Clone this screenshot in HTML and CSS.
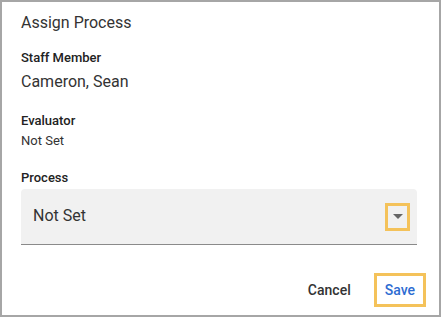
FILE: index.html
```html
<!DOCTYPE html>
<html lang="en">
<head>
    <meta charset="UTF-8">
    <meta name="viewport" content="width=device-width, initial-scale=1.0">
    <title>Assign Process</title>
    <link rel="stylesheet" href="styles.css">
</head>

<body>
    <div class="dialog">
        <h2 class="title">Assign Process</h2>

        <div class="field">
            <div class="label">Staff Member</div>
            <div class="value large">Cameron, Sean</div>
        </div>

        <div class="field">
            <div class="label">Evaluator</div>
            <div class="value">Not Set</div>
        </div>

        <div class="field">
            <div class="label">Process</div>
            <div class="select">
                <span class="select-text">Not Set</span>
                <span class="arrow-box"><span class="arrow"></span></span>
            </div>
        </div>

        <div class="actions">
            <button class="btn">Cancel</button>
            <button class="btn primary">Save</button>
        </div>
    </div>
</body>
</html>
```

FILE: styles.css
```css
* {
    box-sizing: border-box;
}

body {
    margin: 0;
    font-family: Roboto, 'Liberation Sans', sans-serif;
    color: #333;
    background: #fff;
}

.dialog {
    width: 441px;
    height: 317px;
    border: 2px solid #a6a6a6;
    padding: 11px 22px 0 19px;
}

.title {
    margin: 0 0 17px;
    font-size: 16px;
    font-weight: 400;
    line-height: 20px;
}

.field {
    margin-bottom: 21px;
}

.label {
    font-size: 13px;
    font-weight: 500;
    line-height: 16px;
    color: #222;
}

.value {
    margin-top: 4px;
    font-size: 13px;
    line-height: 16px;
}

.value.large {
    margin-top: 6px;
    font-size: 16px;
    line-height: 20px;
}

.select {
    margin-top: 3px;
    height: 56px;
    background: #f1f1f1;
    border-radius: 4px 4px 0 0;
    border-bottom: 1px solid #8a8a8a;
    display: flex;
    align-items: center;
    justify-content: space-between;
    padding: 0 7px 2px 12px;
}

.select-text {
    font-size: 16px;
}

.arrow-box {
    width: 25px;
    height: 28px;
    border: 3px solid #f4c25a;
    display: flex;
    align-items: center;
    justify-content: center;
    margin-top: 2px;
}

.arrow {
    width: 0;
    height: 0;
    border-left: 5px solid transparent;
    border-right: 5px solid transparent;
    border-top: 5px solid #666;
}

.actions {
    display: flex;
    justify-content: flex-end;
    align-items: center;
    gap: 12px;
    margin-top: 28px; /* collapses with the field margin above */
    margin-right: -9px;
}

.btn {
    font-family: Roboto, 'Liberation Sans', sans-serif;
    font-size: 14px;
    font-weight: 500;
    background: none;
    border: 3px solid transparent;
    color: #333;
    padding: 0 8px;
    height: 34px;
    cursor: pointer;
}

.btn.primary {
    color: #2d6cd2;
    border-color: #f4c25a;
}
```
